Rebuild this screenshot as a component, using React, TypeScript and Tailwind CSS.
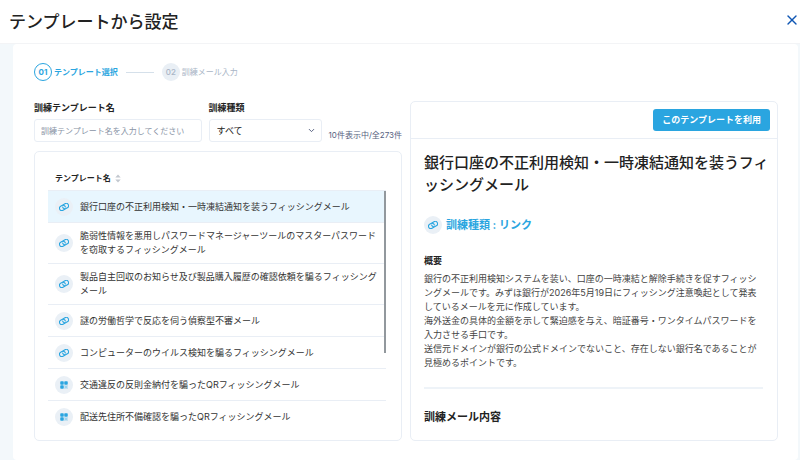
import { useState } from 'react';
import { ChevronDown, X } from 'lucide-react';

type Kind = 'link' | 'qr';

interface Template {
  id: number;
  kind: Kind;
  title: string;
}

const templates: Template[] = [
  { id: 1, kind: 'link', title: '銀行口座の不正利用検知・一時凍結通知を装うフィッシングメール' },
  { id: 2, kind: 'link', title: '脆弱性情報を悪用しパスワードマネージャーツールのマスターパスワードを窃取するフィッシングメール' },
  { id: 3, kind: 'link', title: '製品自主回収のお知らせ及び製品購入履歴の確認依頼を騙るフィッシングメール' },
  { id: 4, kind: 'link', title: '謎の労働哲学で反応を伺う偵察型不審メール' },
  { id: 5, kind: 'link', title: 'コンピューターのウイルス検知を騙るフィッシングメール' },
  { id: 6, kind: 'qr', title: '交通違反の反則金納付を騙ったQRフィッシングメール' },
  { id: 7, kind: 'qr', title: '配送先住所不備確認を騙ったQRフィッシングメール' },
];

const summary = [
  '銀行の不正利用検知システムを装い、口座の一時凍結と解除手続きを促すフィッシングメールです。みずほ銀行が2026年5月19日にフィッシング注意喚起として発表しているメールを元に作成しています。',
  '海外送金の具体的金額を示して緊迫感を与え、暗証番号・ワンタイムパスワードを入力させる手口です。',
  '送信元ドメインが銀行の公式ドメインでないこと、存在しない銀行名であることが見極めるポイントです。',
];

function KindIcon({ kind }: { kind: Kind }) {
  return (
    <span className="flex size-[18px] shrink-0 items-center justify-center rounded-full bg-[#eaf0f6] text-[#2aa5e0]">
      {kind === 'link' ? (
        <svg
          viewBox="0 0 20 16"
          className="h-2 w-2.5"
          fill="none"
          stroke="currentColor"
          strokeWidth="2.2"
          strokeLinecap="round"
          aria-hidden="true"
        >
          {/* two interlocking chain loops, tilted */}
          <g transform="rotate(-30 10 8)">
            <path d="M9.6 12.4a4 4 0 0 1-1.6.3H5a4.7 4.7 0 0 1 0-9.4h3a4.7 4.7 0 0 1 4.4 6.2" />
            <path d="M10.4 3.6a4 4 0 0 1 1.6-.3h3a4.7 4.7 0 0 1 0 9.4h-3a4.7 4.7 0 0 1-4.4-6.2" />
          </g>
        </svg>
      ) : (
        <svg viewBox="0 0 16 16" className="size-2" fill="currentColor" aria-hidden="true">
          <rect x="0.5" y="0.5" width="7" height="7" rx="1.5" />
          <rect x="8.5" y="0.5" width="7" height="7" rx="1.5" />
          <rect x="0.5" y="8.5" width="7" height="7" rx="1.5" />
          <path
            opacity="0.8"
            d="M9 9h2v2H9zM13 9h2v2h-2zM11 11h2v2h-2zM9 13h2v2H9zM13 13h2v2h-2z"
          />
        </svg>
      )}
    </span>
  );
}

export default function App() {
  const [query, setQuery] = useState('');
  const [kind, setKind] = useState('all');
  const [selectedId, setSelectedId] = useState(1);

  return (
    <div className="flex min-h-screen flex-col bg-[#f3f8fb] font-['Inter','Noto_Sans_CJK_JP',sans-serif] text-[#222]">
      <header className="flex h-11 items-center justify-between border-b border-[#f3f4f6] bg-white pl-[9px]">
        <h1 className="text-[17px] font-medium leading-6">テンプレートから設定</h1>
        <button type="button" aria-label="閉じる" className="mb-1 text-[#0f56b3]">
          <X size={16} strokeWidth={2} />
        </button>
      </header>

      <main className="ml-[13px] mr-0.5 flex-1 rounded bg-white pb-[19px] pl-[21px] pr-5 pt-[19px]">
        <ol className="flex items-center text-[8px] leading-[14px]">
          <li aria-current="step" className="flex items-center gap-0.5 font-bold text-[#2aa5e0]">
            <span className="flex size-[18px] items-center justify-center rounded-full border border-[#2aa5e0]">
              01
            </span>
            テンプレート選択
          </li>
          <li aria-hidden="true" className="mx-2 h-px w-7 bg-[#d5e0ea]" />
          <li className="flex items-center gap-0.5 text-[#a9b5c6]">
            <span className="flex size-[18px] items-center justify-center rounded-full bg-[#e9eff5] font-medium">
              02
            </span>
            訓練メール入力
          </li>
        </ol>

        <div className="mt-5 grid grid-cols-2 gap-2">
          <section className="flex min-w-0 flex-col">
            {/* Filters */}
            <div className="flex items-end gap-[7px]">
              <div className="flex min-w-0 flex-1 flex-col gap-1">
                <label htmlFor="template-name" className="text-[9px] font-bold leading-[14px]">
                  訓練テンプレート名
                </label>
                <input
                  id="template-name"
                  type="text"
                  value={query}
                  onChange={(e) => setQuery(e.target.value)}
                  placeholder="訓練テンプレート名を入力してください"
                  className="h-[23px] w-full rounded-[3px] border border-[#e9eef5] px-1.5 text-[8px] placeholder:text-[#8a94a6] focus:outline-none"
                />
              </div>
              <div className="flex w-[113px] flex-col gap-1">
                <label htmlFor="template-kind" className="text-[9px] font-bold leading-[14px]">
                  訓練種類
                </label>
                <div className="relative">
                  <select
                    id="template-kind"
                    value={kind}
                    onChange={(e) => setKind(e.target.value)}
                    className="block h-[23px] w-full appearance-none rounded-[3px] border border-[#e9eef5] bg-white px-[7px] text-[9px] leading-[14px] focus:outline-none"
                  >
                    <option value="all">すべて</option>
                    <option value="link">リンク</option>
                    <option value="qr">QR</option>
                  </select>
                  <ChevronDown
                    size={9}
                    strokeWidth={2.6}
                    className="pointer-events-none absolute right-1.5 top-[7px] text-[#56617f]"
                  />
                </div>
              </div>
              <p className="whitespace-nowrap text-[8px] leading-[14px] text-[#56617f]">
                10件表示中/全273件
              </p>
            </div>

            {/* Template list */}
            <div className="mt-[9px] flex-1 rounded-[5px] border border-[#e9eef5] pb-1.5 pl-[13px] pr-[15px] pt-3.5">
              <div className="relative">
                <table className="w-full border-separate border-spacing-0">
                  <thead>
                    <tr>
                      <th className="h-[25px] border-b border-[#e9eef5] pl-[7px] text-left text-[8px] font-bold">
                        <button type="button" className="flex items-center gap-1">
                          テンプレート名
                          <svg viewBox="0 0 6 10" className="h-[9px] w-1.5" fill="#c3c8cf" aria-hidden="true">
                            <path d="M3 0.5 6 4H0zM3 9.5 0 6h6z" />
                          </svg>
                        </button>
                      </th>
                    </tr>
                  </thead>
                  <tbody>
                    {templates.map((t) => (
                      <tr key={t.id} className={`group ${t.id === selectedId ? 'bg-[#e8f6fe]' : ''}`}>
                        <td className="h-8 border-b border-[#e9eef5] py-1.5 pl-[7px] pr-2 group-last:border-b-0">
                          <button
                            type="button"
                            onClick={() => setSelectedId(t.id)}
                            className="flex w-full items-center gap-[7px] text-left text-[9px] leading-[14px] text-[#333]"
                          >
                            <KindIcon kind={t.kind} />
                            <span>{t.title}</span>
                          </button>
                        </td>
                      </tr>
                    ))}
                  </tbody>
                </table>
                <div className="absolute right-0 top-[25px] h-[162px] w-0.5 bg-[#92989d]" />
              </div>
            </div>
          </section>

          {/* Preview */}
          <section className="min-w-0 rounded-[5px] border border-[#e9eef5]">
            <div className="flex justify-end border-b border-[#e9eef5] p-[7px]">
              <button
                type="button"
                className="h-[22px] rounded-[3px] bg-[#2aa5e0] px-[9px] text-[9px] font-bold text-white"
              >
                このテンプレートを利用
              </button>
            </div>
            <div className="pb-[15px] pl-[13px] pr-2 pt-[13px]">
              <h2 className="text-[15px] font-medium leading-[22px]">
                銀行口座の不正利用検知・一時凍結通知を装うフィッシングメール
              </h2>
              <div className="mt-5 flex items-center gap-1 text-[11px] font-bold leading-[18px] text-[#2aa5e0]">
                <KindIcon kind="link" />
                訓練種類 : リンク
              </div>
              <div className="mr-1.5">
                <h3 className="mt-5 text-[9px] font-bold leading-[14px]">概要</h3>
                <div className="mt-1 text-[9px] leading-[14px] text-[#444]">
                  {summary.map((line) => (
                    <p key={line}>{line}</p>
                  ))}
                </div>
                <hr className="mt-[17px] border-t-2 border-[#eef3f8]" />
                <h3 className="mt-5 text-[11px] font-bold leading-4">訓練メール内容</h3>
              </div>
            </div>
          </section>
        </div>
      </main>
    </div>
  );
}
